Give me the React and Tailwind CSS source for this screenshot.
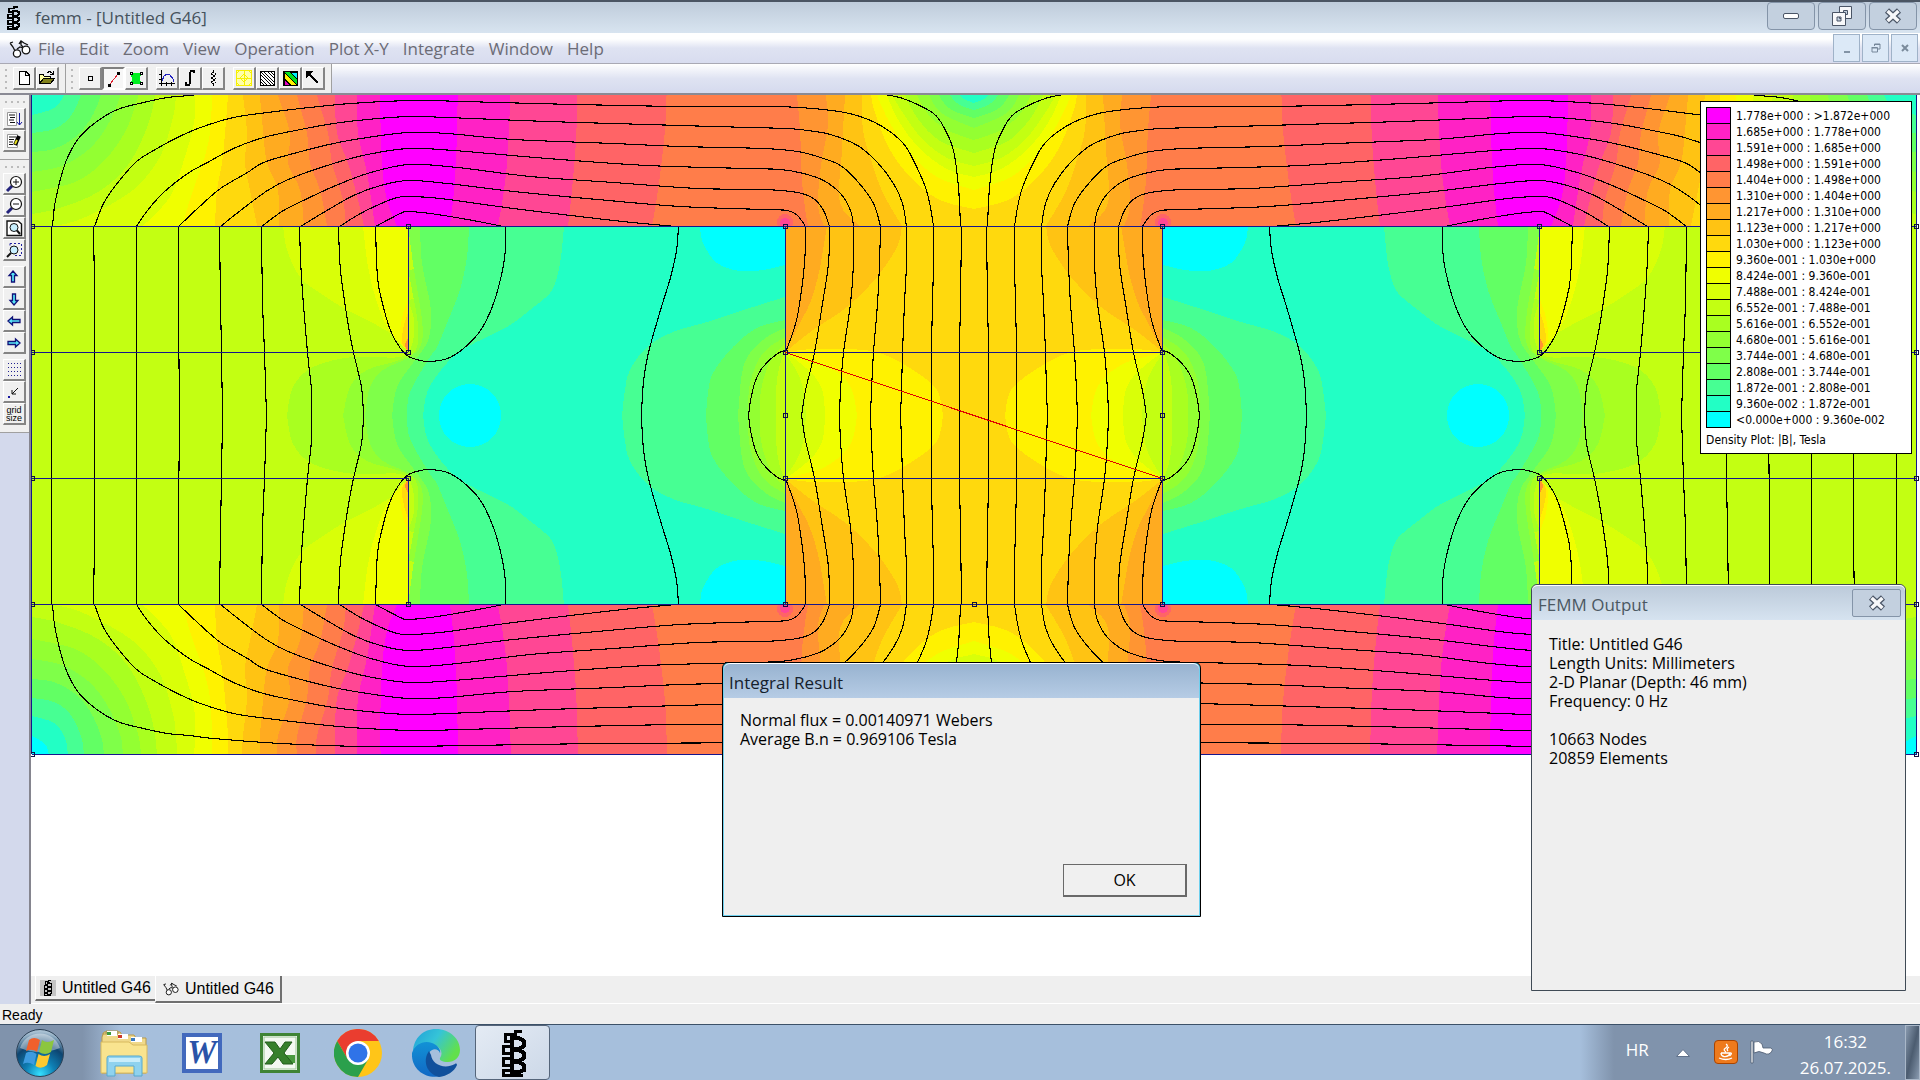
const PALETTE = [
    "#00ffff", "#22ffc5", "#47ff93", "#62ff64", "#7fff49", "#93ff32", "#a9ff20", "#c3ff12", "#d9ff08", "#f0ff00",
    "#fff200", "#ffd90d", "#ffc313", "#ffab20", "#ff9532", "#ff7d4a", "#ff6466", "#ff4794", "#ff22c5", "#ff00ff",
];

const LEGEND = [
    "1.778e+000 : >1.872e+000",
    "1.685e+000 : 1.778e+000",
    "1.591e+000 : 1.685e+000",
    "1.498e+000 : 1.591e+000",
    "1.404e+000 : 1.498e+000",
    "1.310e+000 : 1.404e+000",
    "1.217e+000 : 1.310e+000",
    "1.123e+000 : 1.217e+000",
    "1.030e+000 : 1.123e+000",
    "9.360e-001 : 1.030e+000",
    "8.424e-001 : 9.360e-001",
    "7.488e-001 : 8.424e-001",
    "6.552e-001 : 7.488e-001",
    "5.616e-001 : 6.552e-001",
    "4.680e-001 : 5.616e-001",
    "3.744e-001 : 4.680e-001",
    "2.808e-001 : 3.744e-001",
    "1.872e-001 : 2.808e-001",
    "9.360e-002 : 1.872e-001",
    "<0.000e+000 : 9.360e-002",
];

const MENUS = ["File", "Edit", "Zoom", "View", "Operation", "Plot X-Y", "Integrate", "Window", "Help"];

// Catmull-Rom through "x,y x,y ..." points
function smooth(str) {
    const p = str.split(" ").map((s) => s.split(",").map(Number));
    let d = `M${p[0][0]} ${p[0][1]}`;
    for (let i = 0; i < p.length - 1; i++) {
        const a = p[i - 1] || p[i];
        const b = p[i];
        const c = p[i + 1];
        const e = p[i + 2] || c;
        d += `C${b[0] + (c[0] - a[0]) / 6} ${b[1] + (c[1] - a[1]) / 6} ${c[0] - (e[0] - b[0]) / 6} ${c[1] - (e[1] - b[1]) / 6} ${c[0]} ${c[1]}`;
    }
    return d;
}

// [palette level, boundary, closing segment], painted in order
const TL = "L32 226 L32 76Z";
const CORNER = "L32 76Z";
const TR = "L975 227 L975 76Z";
const TOPMID = "L975 76Z";
const YOKE = [
    [18, "381,76 380,95 382,163 387,200 397,226", TL],
    [17, "357,76 357,95 358,133 367,173 375,226", TL],
    [16, "335,76 335,95 337,133 348,163 358,200 364,226", TL],
    [15, "316,76 317,95 328,133 332,163 343,200 346,226", TL],
    [14, "297,76 297,95 307,133 310,163 320,190 327,226", TL],
    [13, "277,76 278,95 290,133 288,163 300,190 304,226", TL],
    [12, "260,76 260,95 263,130 267,163 278,190 279,226", TL],
    [11, "242,76 243,95 247,133 245,163 250,190 257,226", TL],
    [10, "228,76 228,95 225,133 222,163 217,190 215,226", TL],
    [9, "212,76 212,95 210,133 203,163 193,190 182,226", TL],
    [8, "194,76 195,95 194,123 183,163 170,197 143,226", TL],
    [7, "177,76 176,95 173,117 160,157 133,190 90,215 60,225 32,226", CORNER],
    [6, "157,76 155,95 148,125 128,165 98,192 60,208 32,214", CORNER],
    [5, "141,76 138,97 125,132 103,162 75,182 32,192", CORNER],
    [4, "123,76 120,97 106,128 88,150 62,166 32,172", CORNER],
    [3, "104,76 101,95 90,120 74,138 54,149 32,152", CORNER],
    [2, "84,76 81,95 70,117 54,129 32,133", CORNER],
    [1, "68,76 65,93 54,108 32,115", CORNER],
    [0, "49,76 45,87 32,95", CORNER],
];
const YOKE_MID = [
    [18, "458,76 457,130 455,180 450,226", TR],
    [17, "511,76 508,150 504,190 498,226", TR],
    [16, "578,76 576,140 572,190 568,226", TR],
    [15, "667,76 665,130 658,190 652,226", TR],
    [14, "796,76 797,95 800,130 802,180 805,208 808,226", TR],
    [13, "827,76 826,95 828,125 821,165 818,205 824,226", TR],
    [12, "846,76 845,95 842,150 840,203 860,226", TR],
    [11, "862,76 862,95 863,130 872,163 883,193 902,226", TR],
    [10, "868,76 871,95 875,113 890,150 913,180 940,200 974,209", TOPMID],
    [9, "873,76 877,95 890,123 910,153 937,177 974,190", TOPMID],
    [8, "883,76 887,95 900,123 920,149 947,169 974,177", TOPMID],
    [7, "889,76 893,95 903,113 923,140 947,158 974,166", TOPMID],
    [6, "900,76 905,95 918,119 940,141 974,153", TOPMID],
    [5, "911,76 917,95 928,114 947,130 974,140", TOPMID],
    [4, "924,76 930,97 943,114 974,128", TOPMID],
    [3, "934,76 940,97 952,110 974,118", TOPMID],
    [2, "944,76 950,95 960,105 974,110", TOPMID],
    [1, "954,76 960,95 966,100 974,103", TOPMID],
];
const AIR_END = "L785 226 L785 416Z";
const AIR_MID = "L785 416Z";
const AIR = [
    [6, "287,416 293,387 313,367 353,357 400,357 412,345 414,320 408,300", AIR_END],
    [5, "343,416 350,387 367,370 400,360 416,350 418,325 412,290 408,270", AIR_END],
    [4, "365,416 370,387 383,370 408,358 421,345 422,320 414,270 408,226", AIR_END],
    [3, "392,416 397,387 413,363 427,343 431,323 430,303 422,263 420,226", AIR_END],
    [2, "407,416 410,392 430,357 437,347 447,323 460,290 467,257 469,226", AIR_END],
    [1, "423,416 428,390 447,363 467,347 507,327 530,310 550,293 557,277 561,257 564,226", AIR_END],
    [0, "700,226 703,243 717,263 740,271 763,270 785,265", "L785 226Z"],
    [2, "622,416 625,390 630,370 647,347 673,332 707,322 753,307 785,297", AIR_MID],
    [3, "706,416 708,393 713,373 733,347 757,328 785,320", AIR_MID],
    [4, "738,416 742,373 750,353 767,337 785,328", AIR_MID],
    [5, "748,416 750,383 763,353 785,337", AIR_MID],
    [6, "760,416 761,390 770,362 785,343", AIR_MID],
    [7, "776,416 776,390 779,368 785,350", AIR_MID],
];
const POLE = [
    [8, "283,226 287,250 300,277 320,293 347,310 373,323 400,340 408,352", "L408 226Z"],
    [9, "363,226 368,267 377,303 390,332 408,352", "L408 226Z"],
    [10, "408,300 402,318 400,340 408,352", "Z"],
    [11, "408,313 404,325 402,342 408,352", "Z"],
    [14, "408,338 405,345 408,352", "Z"],
];
const CORE = [
    [12, "902,226 897,247 877,277 847,307 813,330 785,352", "L785 226Z"],
    [13, "827,226 823,250 818,277 810,303 800,323 785,352", "L785 226Z"],
    [10, "785,352 813,349 847,349 880,353 913,370 937,390 943,416", "L785 416Z"],
    [9, "785,352 803,357 823,363 843,377 853,393 857,416", "L785 416Z"],
    [8, "785,352 800,363 815,377 823,393 825,416", "L785 416Z"],
    [7, "785,354 795,368 803,388 806,416", "L785 416Z"],
];

const FLUX = [
    "52,226 55,200 65,162 78,138 95,122 117,109 143,102 167,97 189,95 213,92 280,87 360,84 410,84 600,87 797,88 850,91 890,95 908,100 933,113 944,128 953,150 958,187 960,226",
    "94,226 103,203 115,185 135,162 153,150 177,137 200,127 233,117 267,112 300,108 350,103 408,100 430,100 463,101 573,104 673,106 763,106 780,106 823,109 853,114 880,125 902,142 913,160 925,187 930,207 933,226",
    "136,226 147,210 163,192 187,173 207,162 233,148 263,137 300,129 333,123 367,119 408,116 447,117 547,121 647,124 713,126 785,128 807,130 830,134 857,145 877,162 893,183 902,203 906,226",
    "178,226 197,208 220,188 247,172 263,162 293,153 333,143 367,137 408,132 447,133 513,139 613,143 680,146 763,148 797,151 820,157 840,165 858,182 873,203 880,226",
    "220,226 240,210 267,190 290,178 333,163 367,154 408,148 453,150 547,158 647,165 747,168 780,169 803,173 823,180 840,193 850,210 853,226",
    "261,226 283,210 307,198 333,186 367,173 408,164 457,167 530,176 613,182 697,188 763,189 797,192 813,198 823,210 829,226",
    "300,226 323,212 353,195 380,185 408,180 447,183 513,191 597,199 680,206 763,209 787,210 797,215 805,226",
    "339,226 360,213 383,202 397,197 408,196 440,198 513,208 613,220 675,226",
    "375,226 390,218 402,212 408,211 430,213 467,219 503,226",
    "51,226 51,352 51,416",
    "93,226 94,300 94,416",
    "136,226 136,300 136,416",
    "178,226 178,300 179,416",
    "219,226 220,300 221,352 222,416",
    "261,226 262,300 264,352 266,416",
    "299,226 301,277 307,352 311,390 311,416",
    "338,226 340,270 347,320 353,352 361,387 363,416",
    "375,226 377,277 382,303 390,330 400,348 408,356 420,360 430,361 447,358 463,348 480,330 493,303 502,270 505,247 505,226",
    "678,226 676,250 670,277 662,303 654,330 648,352 644,373 642,393 641,416",
    "785,351 777,353 762,367 755,380 750,400 748,416",
    "805,226 804,263 798,310 793,330 785,352",
    "829,226 828,263 822,303 814,352 805,390 801,416",
    "853,226 853,263 850,303 843,352 840,390 839,416",
    "880,226 879,263 877,303 873,352 871,390 870,416",
    "906,226 906,263 904,303 902,352 901,390 900,416",
    "933,226 933,263 932,303 931,352 931,416",
    "961,226 960,300 959,352 959,416",
];

const NODES = [
    [32, 226], [32, 352], [32, 478], [32, 604], [32, 754],
    [408, 226], [408, 352], [408, 478], [408, 604],
    [785, 226], [785, 352], [785, 415], [785, 478], [785, 604],
    [974, 604],
    [1162, 226], [1162, 352], [1162, 415], [1162, 478], [1162, 604],
    [1539, 226], [1539, 352], [1539, 478], [1539, 604],
    [1916, 226], [1916, 352], [1916, 478], [1916, 604], [1916, 754],
];

const Bands = ({ list }) =>
    list.map(([level, pts, end], i) => <path key={i} d={smooth(pts) + end} fill={PALETTE[level]} />);

const FluxPlot = () => (
    <svg
        className="block w-full h-full"
        viewBox="31 95 1889 881"
        preserveAspectRatio="xMidYMin slice"
        shapeRendering="crispEdges"
        role="img"
        aria-label="Flux density"
    >
        <defs>
            <clipPath id="quadClip">
                <rect x="32" y="76" width="942" height="340" />
            </clipPath>
            <g id="quad" clipPath="url(#quadClip)">
                <rect x="32" y="76" width="943" height="151" fill={PALETTE[19]} />
                <Bands list={YOKE} />
                <Bands list={YOKE_MID} />
                <circle cx="785" cy="222" r="8" fill={PALETTE[16]} />
                <circle cx="785" cy="223" r="5" fill={PALETTE[17]} />
                <rect x="32" y="226" width="753" height="190" fill={PALETTE[7]} />
                <Bands list={AIR} />
                <circle cx="470" cy="415" r="31" fill={PALETTE[0]} />
                <rect x="32" y="226" width="376" height="126" fill={PALETTE[7]} />
                <Bands list={POLE} />
                <rect x="785" y="226" width="190" height="190" fill={PALETTE[11]} />
                <Bands list={CORE} />
                <g fill="none" stroke="#000" strokeWidth="1.1" transform="translate(.5 .5)">
                    {FLUX.map((pts, i) => (
                        <path key={i} d={smooth(pts)} />
                    ))}
                </g>
            </g>
            <g id="half">
                <use href="#quad" />
                <use href="#quad" transform="translate(1948 0) scale(-1 1)" />
            </g>
        </defs>
        <rect x="31" y="76" width="1889" height="901" fill="#fff" />
        <use href="#half" />
        <use href="#half" transform="translate(0 831) scale(1 -1)" />
        <path
            d="M32 226.5H1917M32 604.5H1917M32 754.5H1917M32 352.5H408M785 352.5H1162M1539 352.5H1917M32 478.5H408M785 478.5H1162M1539 478.5H1917M408.5 226V352M408.5 478V604M785.5 226V604M1162.5 226V604M1539.5 226V352M1539.5 478V604M31.5 94V754M1916.5 94V754"
            fill="none"
            stroke="#16168c"
        />
        <path d="M785.5 352.5L1162.5 478.5" stroke="#e00000" />
        <g fill="none" stroke="#101040">
            {NODES.map(([x, y]) => (
                <rect key={`${x}-${y}`} x={x - 1.5} y={y - 1.5} width="4" height="4" />
            ))}
        </g>
    </svg>
);

const Coil = ({ className }) => (
    <svg className={className} viewBox="0 0 28 48" fill="none" stroke="#000" strokeWidth="4" shapeRendering="crispEdges">
        <path d="M23 2H16V5H6V12H11M11 17H4V24H11M11 29H4V36H11M11 41H4V46H24" strokeWidth="3" />
        <path d="M11 9H20L25 12V17L20 20H13V9M11 21H20L25 24V29L20 32H13V21M11 33H20L25 36V41L20 43H13V33" />
    </svg>
);

const Glasses = ({ className }) => (
    <svg className={className} viewBox="0 0 22 18" fill="none" stroke="#111" strokeWidth="1.3">
        <path d="M1 3L4 7L6 11M1 3L4 2M10 4L12 1L15 3L19 5M12 1L12 5L14 7M8 9L11 7L14 8" />
        <circle cx="8" cy="13.5" r="3.6" fill="#fff" />
        <circle cx="17" cy="10" r="3.8" fill="#fff" />
    </svg>
);

const CloseGlyph = ({ className }) => (
    <svg className={className} viewBox="0 0 18 16">
        <path d="M3 2.5L15 13.5M15 2.5L3 13.5" stroke="#4a5566" strokeWidth="6" />
        <path d="M3.6 3L14.4 13M14.4 3L3.6 13" stroke="#f7f8fa" strokeWidth="3.6" />
    </svg>
);

const ToolButton = ({ label, pressed, children }) => (
    <button
        aria-label={label}
        className={
            pressed
                ? "flex size-[23px] items-center justify-center border-2 border-t-[#808080] border-l-[#808080] border-r-white border-b-white bg-[#f7f7f7]"
                : "flex size-[23px] items-center justify-center border-t border-l border-r-2 border-b-2 border-t-white border-l-white border-r-[#858585] border-b-[#858585] bg-[#f0f0f0]"
        }
    >
        <svg className="size-[18px] shrink-0" viewBox="0 0 18 18" fill="none" stroke="#000" shapeRendering="crispEdges">
            {children}
        </svg>
    </button>
);

const SideButton = ({ label, children }) => (
    <button
        aria-label={label}
        className="flex h-[22px] w-[23px] items-center justify-center border-t border-l border-r-2 border-b-2 border-t-white border-l-white border-r-[#858585] border-b-[#858585] bg-[#f0f0f0]"
    >
        <svg className="h-[18px] w-[18px] shrink-0" viewBox="0 0 18 18" fill="none" stroke="#111">
            {children}
        </svg>
    </button>
);

const Lens = ({ children }) => (
    <>
        <path d="M2 16L7 11" stroke="#23237c" strokeWidth="3" />
        <circle cx="11" cy="7" r="5.5" fill="#fff" strokeWidth="1.2" />
        {children}
    </>
);

const Grip = () => (
    <div className="flex w-[6px] flex-col items-center gap-1">
        <i className="size-[2px] bg-[#bbb]" />
        <i className="size-[2px] bg-[#bbb]" />
        <i className="size-[2px] bg-[#bbb]" />
        <i className="size-[2px] bg-[#bbb]" />
    </div>
);

const SideGrip = () => (
    <div className="flex h-[13px] items-center justify-center gap-1">
        <i className="size-[2px] bg-[#bbb]" />
        <i className="size-[2px] bg-[#bbb]" />
        <i className="size-[2px] bg-[#bbb]" />
        <i className="size-[2px] bg-[#bbb]" />
    </div>
);

const TitleBar = () => (
    <header className="flex h-[33px] shrink-0 justify-between border-t-2 border-[#4b5563] bg-gradient-to-b from-[#bfccdb] to-[#d8e4f0] pr-[3px]">
        <div className="flex items-center gap-[14px] pl-[5px]">
            <Coil className="h-6 w-4" />
            <h1 className="text-[17px] text-[#46525c]">femm - [Untitled G46]</h1>
        </div>
        <div className="flex gap-[3px]">
            <button aria-label="Minimize" className="flex h-7 w-12 items-center justify-center rounded-sm border border-[#8494a8] bg-[#c3d0df]">
                <span className="h-[6px] w-4 rounded-xs border border-[#4a5566] bg-white" />
            </button>
            <button aria-label="Restore" className="flex h-7 w-12 items-center justify-center rounded-sm border border-[#8494a8] bg-[#c3d0df]">
                <svg className="size-[22px]" viewBox="0 0 22 22" fill="#f7f8fa" fillRule="evenodd" stroke="#4a5566">
                    <path d="M8.5 1.5H20.5V13.5H8.5ZM12.5 5.5V9.5H16.5V5.5Z" />
                    <path d="M1.5 7.5H14.5V20.5H1.5ZM6 12V16H10V12Z" />
                </svg>
            </button>
            <button aria-label="Close" className="flex h-7 w-12 items-center justify-center rounded-sm border border-[#8494a8] bg-[#c3d0df]">
                <CloseGlyph className="h-4 w-[18px]" />
            </button>
        </div>
    </header>
);

const MenuBar = () => (
    <nav className="flex h-[31px] shrink-0 justify-between border-b border-[#a9a9b4] bg-gradient-to-b from-white from-20% via-[#dfe3f2] via-50% to-[#d8dcef] pr-[2px]">
        <div className="flex items-center pt-px">
            <Glasses className="ml-[9px] h-[18px] w-[22px]" />
            {MENUS.map((m) => (
                <button key={m} className="px-[7px] text-[17px] leading-none text-[#6c6c76]">
                    {m}
                </button>
            ))}
        </div>
        <div className="flex gap-[2px] pt-px">
            <button aria-label="Minimize document" className="flex h-7 w-[27px] items-end justify-center border border-[#9fb2c8] bg-[#dce9f7] pb-2">
                <span className="h-[2px] w-[6px] bg-[#8394a6]" />
            </button>
            <button aria-label="Restore document" className="flex h-7 w-[27px] items-center justify-center border border-[#9fb2c8] bg-[#dce9f7]">
                <svg className="size-[10px]" viewBox="0 0 10 10" fill="none" stroke="#76879a">
                    <path d="M3.5 3V1H9V6H7M3 1.5H9M1 4.5H6.5V9H1V4M1 5H6" />
                </svg>
            </button>
            <button aria-label="Close document" className="flex h-7 w-[27px] items-center justify-center border border-[#9fb2c8] bg-[#dce9f7]">
                <svg className="size-2" viewBox="0 0 8 8" stroke="#7b8b9c" strokeWidth="2">
                    <path d="M1 1L7 7M7 1L1 7" />
                </svg>
            </button>
        </div>
    </nav>
);

const ToolBar = () => (
    <div className="flex h-[31px] shrink-0 border-b-2 border-[#8a8a94] bg-gradient-to-b from-white via-[#dfe3f2] to-[#d5daee]">
        <div className="flex items-center border-r border-[#a0a0a0] bg-[#f0f0f0] pr-1.5 pl-[3px]">
            <Grip />
            <div className="ml-1 flex">
                <ToolButton label="New">
                    <path d="M4.5 2.5H11L14.5 6V15.5H4.5ZM10.5 2.5V6.5H14" fill="#fff" />
                </ToolButton>
                <ToolButton label="Open">
                    <path d="M1.5 14.5V5.5H5L6.5 7.5H12.5V9.5" fill="#ffffa0" />
                    <path d="M1.5 14.5L5.5 9.5H16.5L12.5 14.5Z" fill="#80801a" />
                    <path d="M9 3.5L12 2.5L15 5M15.5 2V5.5H12" />
                </ToolButton>
            </div>
        </div>
        <div className="flex items-center border-r border-[#a0a0a0] bg-[#f0f0f0] pr-1.5 pl-[3px]">
            <Grip />
            <div className="ml-1 flex">
                <ToolButton label="Point values">
                    <rect x="7.5" y="7.5" width="4" height="4" />
                </ToolButton>
                <ToolButton label="Contour" pressed>
                    <path d="M5 14L13 4" stroke="#e02030" />
                    <path d="M3 14h3v3h-3zM12 2h3v3h-3z" fill="#000" stroke="none" />
                </ToolButton>
                <ToolButton label="Areas">
                    <path d="M5 4H14V6L13 9L14 15H4L5 9L4 6Z" fill="#00f020" stroke="none" />
                    <path d="M3.5 3.5h2v2h-2zM13.5 3.5h2v2h-2zM3.5 13.5h2v2h-2zM13.5 13.5h2v2h-2z" fill="#fff" />
                </ToolButton>
            </div>
            <div className="ml-2 flex">
                <ToolButton label="Plot">
                    <path d="M3.5 1V17M1 14.5H17M1 5.5H4M1 10.5H4M8.5 13V17M13.5 13V17" />
                    <path d="M4 12L6 7L9 5L12 6L15 10L16 13" stroke="#2020c0" />
                </ToolButton>
                <ToolButton label="Line integral">
                    <path d="M13 4V2H10L9 4V14L8 16H5V13" strokeWidth="2" />
                </ToolButton>
                <ToolButton label="Circuit">
                    <path d="M9.5 1V3L7 5L11 7L7 9L11 11L7 13L9.5 15V17M11 4L12 6M11 9L12 10M11 13L12 14" />
                </ToolButton>
            </div>
            <div className="ml-2 flex">
                <ToolButton label="Mesh">
                    <path d="M1.5 1.5H16.5V16.5H1.5ZM9 1V17M1 9H17M1 5L5 1M13 1L17 5M1 13L5 17M17 13L13 17M5 9L9 5L13 9L9 13Z" stroke="#f6f000" fill="#ffffa8" />
                </ToolButton>
                <ToolButton label="Contours">
                    <rect x="2.5" y="2.5" width="14" height="14" fill="#fff" />
                    <path d="M3 13L6 16M3 10L9 16M3 6L13 16M3 3L16 16M6 3L16 13M10 3L16 9M13 3L16 6" />
                </ToolButton>
                <ToolButton label="Density">
                    <rect x="2.5" y="2.5" width="14" height="14" fill="#00e020" />
                    <path d="M9 3H16V10Z" fill="#00f0ff" />
                    <path d="M3 3L16 16H10L3 9Z" fill="#fff200" />
                    <path d="M3 10L9 16H3Z" fill="#e000c0" />
                </ToolButton>
                <ToolButton label="Vectors">
                    <path d="M4 4L14 14" strokeWidth="2" />
                    <path d="M2 2H9L2 9Z" fill="#000" stroke="none" />
                </ToolButton>
            </div>
        </div>
    </div>
);

const ArrowIcon = ({ d }) => <path d={d} fill="#58e8f8" stroke="#101078" strokeWidth="1.3" />;

const SideBar = () => (
    <aside className="flex w-[31px] shrink-0 flex-col border-r-2 border-[#85858f] bg-[#d3d9ec]">
        <div className="flex flex-col items-center border-b border-[#a0a0a0] bg-[#f0f0f0] pb-[7px]">
            <SideGrip />
            <SideButton label="Console">
                <path d="M2.5 2.5H11.5V15.5H2.5Z" stroke="#999" fill="#fff" />
                <path d="M4 5H10M5 7.5H10M4 10H9M5 12.5H10" />
                <path d="M14.5 3V15M12 12L14.5 15L17 12" stroke="#1818a0" />
            </SideButton>
            <SideButton label="Notes">
                <path d="M2.5 2.5H12.5V15.5H2.5Z" stroke="#999" fill="#fff" />
                <path d="M4 5H11M4 7.5H9M4 10H8M4 12.5H8" />
                <path d="M10 13L14 4" stroke="#000" strokeWidth="4" />
                <path d="M10 12L12 8" stroke="#e8e020" strokeWidth="2" />
            </SideButton>
        </div>
        <div className="flex flex-col items-center border-b border-[#a0a0a0] bg-[#f0f0f0] pb-[7px]">
            <SideGrip />
            <SideButton label="Zoom in">
                <Lens>
                    <path d="M8 7H14M11 4V10" />
                </Lens>
            </SideButton>
            <SideButton label="Zoom out">
                <Lens>
                    <path d="M8 7H14" />
                </Lens>
            </SideButton>
            <SideButton label="Zoom extents">
                <path d="M2 2H13L16.5 5V16.5H2Z" fill="#fff" strokeWidth="1.4" />
                <circle cx="9" cy="8.5" r="4" fill="#c8f0ff" />
                <path d="M12 11.5L15 15" strokeWidth="2" />
            </SideButton>
            <SideButton label="Zoom window">
                <path d="M5 2.5H16.5V14.5H10M5 2.5V6" stroke="#2020a0" strokeDasharray="2 2" />
                <circle cx="9" cy="9" r="4" fill="#c8f0ff" />
                <path d="M2 16L6 12" strokeWidth="2" />
            </SideButton>
            <div className="h-[5px]" />
            <SideButton label="Pan up">
                <ArrowIcon d="M8 3L12 7.5H9.5V14H6.5V7.5H4Z" />
            </SideButton>
            <SideButton label="Pan down">
                <ArrowIcon d="M9 15L13 10.5H10.5V4H7.5V10.5H5Z" />
            </SideButton>
            <SideButton label="Pan left">
                <ArrowIcon d="M3 9L7.5 5V7.5H15V10.5H7.5V13Z" />
            </SideButton>
            <SideButton label="Pan right">
                <ArrowIcon d="M15 9L10.5 5V7.5H3V10.5H10.5V13Z" />
            </SideButton>
            <div className="h-[5px]" />
            <SideButton label="Show grid">
                <path d="M3 2.5H17M3 6.5H17M3 10.5H17M3 14.5H17" stroke="#202090" strokeDasharray="1 2" />
            </SideButton>
            <SideButton label="Snap grid">
                <path d="M13 5L7 11M7 7V11H11" />
                <path d="M3 13h2v2h-2z" fill="#1818a0" stroke="none" />
            </SideButton>
            <button
                aria-label="grid size"
                className="flex h-[22px] w-[23px] flex-col items-center justify-center border-t border-l border-r-2 border-b-2 border-t-white border-l-white border-r-[#858585] border-b-[#858585] bg-[#f0f0f0] font-['Liberation_Sans',Arial,sans-serif] text-[9px] leading-[8px] text-black"
            >
                <span>grid</span>
                <span>size</span>
            </button>
        </div>
    </aside>
);

const Legend = () => (
    <section className="absolute top-[6px] right-2 border border-black bg-white py-[5px] pr-[21px] pl-[5px] font-['DejaVu_Sans_Condensed','DejaVu_Sans',sans-serif] text-[12px] leading-4 text-black">
        <ul>
            {LEGEND.map((range, i) => (
                <li key={range} className="flex h-4 gap-[5px] whitespace-nowrap">
                    <span className="h-[17px] w-[25px] border border-black" style={{ backgroundColor: PALETTE[19 - i] }} />
                    <span className="pt-px">{range}</span>
                </li>
            ))}
        </ul>
        <p className="pt-[5px]">Density Plot: |B|, Tesla</p>
    </section>
);

const OutputWindow = () => (
    <section className="absolute top-[584px] right-[14px] flex h-[407px] w-[375px] flex-col rounded-t-md border border-[#3f4a55] bg-[#efefef]">
        <div className="flex h-[35px] items-center justify-between rounded-t-md border-t border-white bg-gradient-to-b from-[#bccada] to-[#d6e3f0] pr-1 pl-[6px]">
            <h2 className="pt-1 text-[17px] text-[#4b5862]">FEMM Output</h2>
            <button aria-label="Close output" className="mb-px flex h-7 w-[49px] items-center justify-center rounded-xs border border-[#8494a8] bg-[#c3d0df]">
                <CloseGlyph className="h-4 w-[18px]" />
            </button>
        </div>
        <div className="px-[17px] pt-[15px] text-[16px] leading-[19px] text-black">
            <p>Title: Untitled G46</p>
            <p>Length Units: Millimeters</p>
            <p>2-D Planar (Depth: 46 mm)</p>
            <p>Frequency: 0 Hz</p>
            <p className="pt-[19px]">10663 Nodes</p>
            <p>20859 Elements</p>
        </div>
    </section>
);

const ResultDialog = () => (
    <section
        role="dialog"
        aria-labelledby="result-title"
        className="absolute top-[662px] left-[722px] flex h-[255px] w-[479px] flex-col rounded-t-md border border-black bg-[#6fd0ee] px-px pb-px"
    >
        <div className="flex h-[35px] items-center rounded-t-md border-t border-white bg-gradient-to-b from-[#98b3d0] to-[#b6cce5] pl-[5px]">
            <h2 id="result-title" className="pt-1 text-[17px] text-[#15202c]">
                Integral Result
            </h2>
        </div>
        <div className="flex flex-1 flex-col justify-between bg-[#efefef] px-4 pt-[13px] pb-[18px] text-[16px] leading-[19px] text-black">
            <div>
                <p>Normal flux = 0.00140971 Webers</p>
                <p>Average B.n = 0.969106 Tesla</p>
            </div>
            <button className="mr-[-4px] h-[33px] w-[124px] self-end border-t border-l border-r-2 border-b-2 border-[#696969] bg-[#f0f0f0]">OK</button>
        </div>
    </section>
);

const DocTabs = () => (
    <div className="flex h-[28px] shrink-0 items-start border-b border-white bg-[#efefef] pl-1 font-['Liberation_Sans',Arial,sans-serif] text-[16px] text-black">
        <button className="flex h-[25px] items-center gap-[6px] border-b-2 border-l border-b-[#707070] border-l-white pt-px pr-1 pl-1 whitespace-nowrap">
            <span className="flex size-4 items-center justify-center bg-[#c4c4c4]">
                <Coil className="h-4 w-[10px]" />
            </span>
            Untitled G46
        </button>
        <button className="flex h-[27px] items-center gap-[6px] border-r-2 border-b-2 border-l border-r-[#707070] border-b-[#707070] border-l-white pt-px pr-[6px] pl-[7px] whitespace-nowrap">
            <Glasses className="h-[14px] w-4" />
            Untitled G46
        </button>
    </div>
);

const TaskButton = ({ label, active, children }) => (
    <button
        aria-label={label}
        className={
            active
                ? "flex h-[55px] w-[75px] items-center justify-center rounded-sm border border-[#55657a] bg-gradient-to-br from-[#e4ebf4] to-[#ccd8e8]"
                : "flex h-[55px] w-[78px] items-center justify-center"
        }
    >
        {children}
    </button>
);

const TaskBar = () => (
    <footer className="flex h-14 shrink-0 justify-between border-t border-[#3c5168] bg-[#a6bfdc] text-white">
        <div className="flex items-center bg-gradient-to-r from-[#8093ac] from-15% to-[#a6bfdc] to-[22%]">
            <button aria-label="Start" className="mr-[5px] flex w-20 justify-center">
                <svg className="size-[50px]" viewBox="0 0 50 50">
                    <defs>
                        <radialGradient id="orb" cx="50%" cy="95%" r="90%">
                            <stop offset="0" stopColor="#35e0ff" />
                            <stop offset=".35" stopColor="#0e7fb4" />
                            <stop offset=".7" stopColor="#0d4470" />
                            <stop offset="1" stopColor="#a8c0d2" />
                        </radialGradient>
                    </defs>
                    <circle cx="25" cy="25" r="23.5" fill="url(#orb)" stroke="#2d4257" />
                    <path d="M5 20A21 21 0 0 1 45 20Q25 28 5 20Z" fill="#fff" opacity=".4" />
                    <path d="M14 12Q19 8 25 12L22 24Q17 20 11 23Z" fill="#f0602c" />
                    <path d="M27 12Q32 16 39 12L36 24Q30 28 24 24Z" fill="#8cc63e" />
                    <path d="M11 25Q16 22 21.5 26L19 37Q13 33 8 36Z" fill="#3d9be0" />
                    <path d="M23.5 26Q29 30 35 26L32 37Q26 42 20.5 38Z" fill="#fdc92f" />
                </svg>
            </button>
            <TaskButton label="Explorer">
                <svg className="size-12" viewBox="0 0 48 48">
                    <path d="M2 5H18V2H6V5M2 8L4 3H20L22 6H34L36 9H46V44H2Z" fill="#f0d98a" stroke="#b79a4c" />
                    <path d="M7 2h10v5h-10zM18 5h10v5h-10zM31 8h11v5h-11z" fill="#fff" />
                    <path d="M7 3h4v3h-4z" fill="#3b9a3b" />
                    <path d="M18 6h4v3h-4z" fill="#cc3a2a" />
                    <path d="M31 9h4v3h-4z" fill="#3b7ac0" />
                    <path d="M1 13H29L33 16H47V44H1Z" fill="#f9e48f" stroke="#d8b95e" />
                    <path d="M7 47V29Q7 27 9 27H39Q42 27 42 29V47H34V37H15V47Z" fill="#8fd2ee" stroke="#56a9cf" />
                    <path d="M9 29H40V33H9Z" fill="#c9edfa" />
                </svg>
            </TaskButton>
            <TaskButton label="Word">
                <span className="flex size-10 items-center justify-center border-4 border-[#4269bd] bg-white font-['Liberation_Serif',serif] text-[33px] leading-none font-bold text-[#2a53a8] italic">
                    W
                </span>
            </TaskButton>
            <TaskButton label="Excel">
                <svg className="size-10" viewBox="0 0 40 40">
                    <rect x="1.5" y="1.5" width="37" height="37" fill="#fff" stroke="#3f8434" strokeWidth="3" />
                    <rect x="4" y="4" width="32" height="32" fill="#f4f9f2" stroke="#9cc594" />
                    <path d="M22 22H35V30H22Z" fill="#4a9a3f" />
                    <path d="M5 9H15L20 16L25 9H32L24 20L33 31H23L18 24L12 31H5L14 20Z" fill="#37802c" stroke="#235c1b" />
                </svg>
            </TaskButton>
            <TaskButton label="Chrome">
                <svg className="size-12" viewBox="0 0 48 48">
                    <circle cx="24" cy="24" r="24" fill="#ffc518" />
                    <path d="M3.2 12A24 24 0 0 1 44.8 12H24L13.6 30Z" fill="#ea3d2f" />
                    <path d="M3.2 12A24 24 0 0 0 24 48L34.4 30L13.6 30Z" fill="#2ba04c" />
                    <circle cx="24" cy="24" r="12" fill="#fff" />
                    <circle cx="24" cy="24" r="9.5" fill="#2f73e8" />
                </svg>
            </TaskButton>
            <TaskButton label="Edge">
                <svg className="size-12" viewBox="0 0 48 48">
                    <defs>
                        <linearGradient id="edgeTop" x1="0" y1="0" x2="1" y2=".5">
                            <stop offset="0" stopColor="#1f9fd8" />
                            <stop offset=".5" stopColor="#35c4d8" />
                            <stop offset="1" stopColor="#62e04c" />
                        </linearGradient>
                        <linearGradient id="edgeLeft" x1="0" y1="0" x2="0" y2="1">
                            <stop offset="0" stopColor="#1292d6" />
                            <stop offset="1" stopColor="#1168c4" />
                        </linearGradient>
                    </defs>
                    <path d="M1 22C2 9 11 0 24 0C38 0 48 10 48 21C48 29 42 33 36 33C30 33 27 31 28 29C30 26 30 23 28 20C22 12 8 12 1 22Z" fill="url(#edgeTop)" />
                    <path d="M0 24C3 15 12 11 20 14C26 16 29 21 28 24C26 19 20 19 17 24C12 33 18 44 30 47C12 51 -1 39 0 24Z" fill="url(#edgeLeft)" />
                    <path d="M17 22C10 32 15 45 27 48C35 47 42 43 45 36C45 35 44 34 43 35C32 41 20 35 19 26Z" fill="#10509c" />
                </svg>
            </TaskButton>
            <TaskButton label="femm" active>
                <Coil className="h-12 w-7" />
            </TaskButton>
        </div>
        <div className="flex items-stretch bg-gradient-to-r from-[#a6bfdc] to-[#8093ac] to-[10%] pl-[46px]">
            <div className="flex items-center pb-[6px]">
                <span className="text-[17px]">HR</span>
                <button aria-label="Show hidden icons" className="ml-[27px] pt-[6px]">
                    <svg className="h-2 w-[14px]" viewBox="0 0 14 8">
                        <path d="M7 0.5L13.5 7.5H0.5Z" fill="#fff" stroke="#60718a" />
                    </svg>
                </button>
                <span className="mt-1 ml-6 flex size-6 items-center justify-center rounded-sm border border-[#a84400] bg-[#ee7a1c]">
                    <svg className="size-[18px]" viewBox="0 0 18 18" fill="none" stroke="#fff" strokeWidth="1.3">
                        <path d="M9 1Q12 3 8 5.5Q6 7 9 9M12 4Q9 6 11 8M4 10H13Q12 14 7 13.5Q4 13 4 10M13 10Q16 10 12.5 13M2 15Q9 18 15 15" />
                    </svg>
                </span>
                <svg className="mt-1 ml-3 h-6 w-6" viewBox="0 0 24 24" fill="#fff" stroke="#4c5b70" strokeWidth=".8">
                    <path d="M1 1H3V23H1ZM4 2Q9 0 12 4L13 8H21Q23 9 22 11Q19 16 14 13Q9 10 4 13Z" />
                </svg>
            </div>
            <div className="ml-[26px] flex flex-col items-center pt-1 text-[17px] leading-[26px]">
                <span>16:32</span>
                <span>26.07.2025.</span>
            </div>
            <button aria-label="Show desktop" className="ml-[14px] w-[15px] border border-[#a9b7c8] bg-gradient-to-br from-[#8a9bb0] via-[#4c5c70] to-[#8a9bb0]" />
        </div>
    </footer>
);

const App = () => {
    return (
        <div className="relative flex h-screen flex-col overflow-hidden bg-[#efefef] font-['Open_Sans','Noto_Sans',sans-serif]">
            <TitleBar />
            <MenuBar />
            <ToolBar />
            <div className="flex min-h-0 flex-1">
                <SideBar />
                <main className="relative flex min-w-0 flex-1 flex-col">
                    <div className="min-h-0 flex-1">
                        <FluxPlot />
                    </div>
                    <DocTabs />
                    <Legend />
                </main>
            </div>
            <div className="h-5 shrink-0 pl-[2px] font-['Liberation_Sans',Arial,sans-serif] text-[14px] leading-[22px] text-black">Ready</div>
            <TaskBar />
            <ResultDialog />
            <OutputWindow />
        </div>
    );
};

export default App;
